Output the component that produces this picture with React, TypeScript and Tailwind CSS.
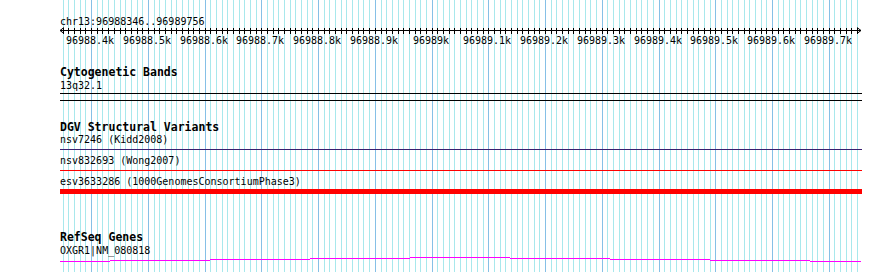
import React from "react";

const BP0 = 96988346;
const BP1 = 96989756;
const X0 = 61;
const SCALE = 800 / (BP1 - BP0);
const xAt = (bp: number) => X0 + (bp - BP0) * SCALE;
const col = (bp: number) => Math.floor(xAt(bp)) + 0.5;

const minorBps: number[] = [];
for (let bp = 96988350; bp <= 96989750; bp += 10) minorBps.push(bp);
const majorBps = minorBps.filter((bp) => bp % 100 === 0);

const label = (bp: number) => {
  const k = Math.floor(bp / 1000);
  const d = (bp % 1000) / 100;
  return d ? `${k}.${d}k` : `${k}k`;
};

const mono = "font-['DejaVu_Sans_Mono',monospace]";

const Grid: React.FC = () => (
  <svg className="absolute inset-0" width={890} height={272} shapeRendering="crispEdges">
    {minorBps.map((bp) => (
      <line
        key={bp}
        x1={col(bp)}
        x2={col(bp)}
        y1={0}
        y2={272}
        stroke={bp % 100 === 0 ? "#86c0e6" : "#a8e8ec"}
        strokeWidth={1}
      />
    ))}
  </svg>
);

const Ruler: React.FC = () => (
  <svg width={890} height={20} className="block" shapeRendering="crispEdges">
    <line x1={60} x2={861} y1={3.5} y2={3.5} stroke="#000" />
    <line x1={60} y1={3.5} x2={64} y2={0.5} stroke="#000" shapeRendering="auto" />
    <line x1={60} y1={3.5} x2={64} y2={6.5} stroke="#000" shapeRendering="auto" />
    <line x1={861} y1={3.5} x2={857} y2={0.5} stroke="#000" shapeRendering="auto" />
    <line x1={861} y1={3.5} x2={857} y2={6.5} stroke="#000" shapeRendering="auto" />
    {minorBps.map((bp) => (
      <line key={bp} x1={col(bp)} x2={col(bp)} y1={1} y2={7} stroke="#000" />
    ))}
    {majorBps.map((bp) => (
      <text
        key={bp}
        x={col(bp) - 1.5}
        y={17}
        textAnchor="middle"
        fontFamily="'DejaVu Sans Mono', monospace"
        fontSize={10}
        fill="#000"
      >
        {label(bp)}
      </text>
    ))}
  </svg>
);

const Heading: React.FC<{ children: React.ReactNode }> = ({ children }) => (
  <div className={`${mono} pl-[60px] text-[11.5px] font-bold leading-[13px] text-black`}>{children}</div>
);

const Label: React.FC<{ children: React.ReactNode; className?: string }> = ({ children, className }) => (
  <div className={`${mono} pl-[60px] text-[10px] leading-[12px] text-black ${className ?? ""}`}>{children}</div>
);

const Bar: React.FC<{ className: string }> = ({ className }) => <div className={`ml-[60px] w-[802px] ${className}`} />;

// gene model drawn as a shallow stepped line
const steps = [
  [60, 110, 4],
  [110, 210, 3],
  [210, 310, 2],
  [310, 410, 1],
  [410, 510, 0],
  [510, 610, 1],
  [610, 710, 2],
  [710, 810, 3],
  [810, 861, 4],
];

const GeneLine: React.FC = () => (
  <svg width={890} height={6} className="block" shapeRendering="crispEdges">
    {steps.map(([a, b, y]) => (
      <rect key={a} x={a} y={y} width={b - a} height={1} fill="#ff00ff" />
    ))}
  </svg>
);

export default function App() {
  return (
    <div className="relative h-[272px] w-[890px] overflow-hidden bg-white">
      <Grid />
      <div className="relative flex flex-col">
        <Label className="h-[27px] pt-[16px]">chr13:96988346..96989756</Label>
        <Ruler />

        <div className="mt-[19px]">
          <Heading>Cytogenetic Bands</Heading>
        </div>
        <Label className="mt-px">13q32.1</Label>
        <Bar className="mt-px h-px bg-black" />
        <Bar className="mt-[6px] h-px bg-black" />

        <div className="mt-[20px]">
          <Heading>DGV Structural Variants</Heading>
        </div>
        <Label>nsv7246 (Kidd2008)</Label>
        <Bar className="mt-[3px] h-px bg-[#3a2070]" />
        <Label className="mt-[5px]">nsv832693 (Wong2007)</Label>
        <Bar className="mt-[3px] h-px bg-[#ff0000]" />
        <Label className="mt-[5px]">esv3633286 (1000GenomesConsortiumPhase3)</Label>
        <Bar className="mt-px h-[5px] bg-[#ff0000]" />

        <div className="mt-[37px]">
          <Heading>RefSeq Genes</Heading>
        </div>
        <Label className="mt-px">OXGR1|NM_080818</Label>
        <GeneLine />
      </div>
    </div>
  );
}
